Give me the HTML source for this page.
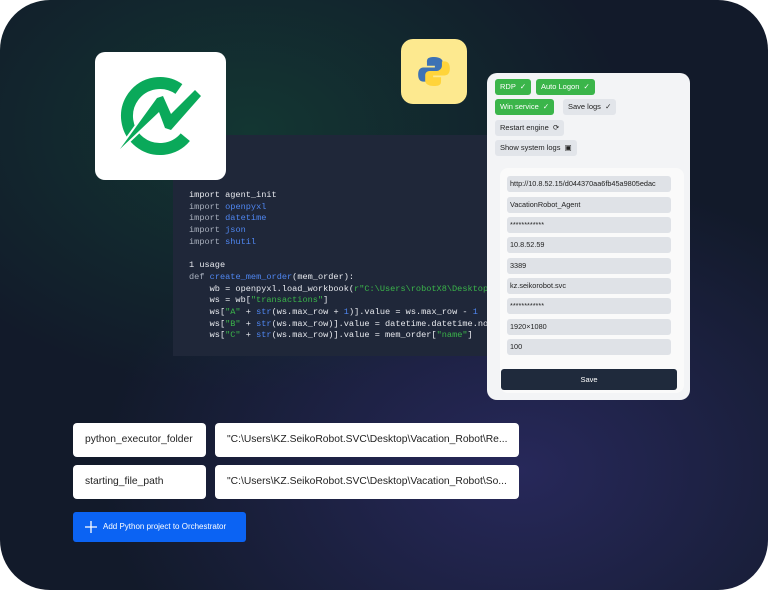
<!DOCTYPE html>
<html><head><meta charset="utf-8"><style>
*{margin:0;padding:0;box-sizing:border-box}
body{width:768px;height:590px;background:#fff;overflow:hidden;font-family:"Liberation Sans",sans-serif;position:relative}
.bg{position:absolute;left:0;top:0;width:768px;height:590px;border-radius:50px;overflow:hidden;
background:radial-gradient(ellipse 380px 260px at 250px 130px,#133632 0%,rgba(20,40,45,0) 100%),radial-gradient(ellipse 420px 300px at 520px 470px,#27285a 0%,rgba(30,30,60,0) 100%),#121a2a}
.abs{position:absolute}
.code{left:173px;top:135px;width:330px;height:221px;background:#1f2739;font-family:"Liberation Mono",monospace;font-size:8.6px;line-height:11.7px;color:#e8eaef;padding:55px 0 0 16px;white-space:pre}
.b{color:#4f86f0}.g{color:#3bb54a}.k{color:#a9b0bd}
.panel{left:487px;top:73px;width:203px;height:327px;background:#f3f4f6;border-radius:10px;font-size:7.5px;color:#222}
.chip{position:absolute;height:16px;border-radius:3px;padding:0 5px;line-height:16px;white-space:nowrap}
.gr{background:#3bb54a;color:#fff}.gy{background:#e2e5ea;color:#222}
.inner{position:absolute;left:13px;top:95px;width:184px;height:225px;background:#fafafa;border-radius:8px}
.f{position:absolute;left:7px;width:164px;height:16px;background:#dfe2e7;border-radius:3px;padding-left:3px;line-height:16px;font-size:7.3px;color:#222;white-space:nowrap;overflow:hidden}
.save{position:absolute;left:14px;top:296px;width:176px;height:21px;background:#1f2a3c;border-radius:3px;color:#fff;text-align:center;line-height:21px;font-size:7.5px}
.box{position:absolute;background:#fff;border-radius:4px;height:34px;line-height:34px;font-size:10.3px;color:#222;padding-left:12px;white-space:nowrap;overflow:hidden}
</style></head><body>
<div class="bg">
<div class="abs code"><span>import agent_init</span>
<span class="k">import</span> <span class="b">openpyxl</span>
<span class="k">import</span> <span class="b">datetime</span>
<span class="k">import</span> <span class="b">json</span>
<span class="k">import</span> <span class="b">shutil</span>

1 usage
<span class="k">def</span> <span class="b">create_mem_order</span>(mem_order):
    wb = openpyxl.load_workbook(<span class="g">r"C:\Users\robotX8\Desktop\t</span>
    ws = wb[<span class="g">"transactions"</span>]
    ws[<span class="g">"A"</span> + <span class="b">str</span>(ws.max_row + <span class="b">1</span>)].value = ws.max_row - <span class="b">1</span>
    ws[<span class="g">"B"</span> + <span class="b">str</span>(ws.max_row)].value = datetime.datetime.now(
    ws[<span class="g">"C"</span> + <span class="b">str</span>(ws.max_row)].value = mem_order[<span class="g">"name"</span>]</div>

<div class="abs" style="left:95px;top:52px;width:131px;height:128px;background:#fff;border-radius:10px">
<svg width="131" height="128" viewBox="0 0 131 128">
<path d="M83.9 37 A33 33 0 1 0 90.3 85.2" fill="none" stroke="#0aa95a" stroke-width="12"/>
<polygon points="25,97 62,46 68,44 76,62 100,38 106,44 76,78 70,76 64,60" fill="#0aa95a" stroke="#fff" stroke-width="4" stroke-linejoin="round"/>
<polygon points="25,97 62,46 68,44 76,62 100,38 106,44 76,78 70,76 64,60" fill="#0aa95a"/>
</svg></div>

<div class="abs" style="left:401px;top:39px;width:66px;height:65px;background:#fde98f;border-radius:12px">
<svg width="66" height="65" viewBox="0 0 66 65">
<g transform="translate(33,32.5) scale(0.88) translate(-33,-32.5)">
<path d="M33 16 c-8 0-8 3-8 6v4h9v2H21c-4 0-6 3-6 8s2 8 6 8h3v-5c0-3 3-6 6-6h8c3 0 5-2 5-5v-6c0-3-3-6-10-6z" fill="#3d72b4"/>
<path d="M33 49 c8 0 8-3 8-6v-4h-9v-2h13c4 0 6-3 6-8s-2-8-6-8h-3v5c0 3-3 6-6 6h-8c-3 0-5 2-5 5v6c0 3 3 6 10 6z" fill="#ffd43b"/>
</g></svg></div>

<div class="abs panel">
<div class="chip gr" style="left:8px;top:6px">RDP &nbsp;✓</div>
<div class="chip gr" style="left:49px;top:6px">Auto Logon &nbsp;✓</div>
<div class="chip gr" style="left:8px;top:26px">Win service &nbsp;✓</div>
<div class="chip gy" style="left:76px;top:26px">Save logs &nbsp;✓</div>
<div class="chip gy" style="left:8px;top:47px">Restart engine &nbsp;⟳</div>
<div class="chip gy" style="left:8px;top:67px">Show system logs &nbsp;▣</div>
<div class="inner">
<div class="f" style="top:8px">http://10.8.52.15/d044370aa6fb45a9805edac</div>
<div class="f" style="top:29px">VacationRobot_Agent</div>
<div class="f" style="top:49px">************</div>
<div class="f" style="top:69px">10.8.52.59</div>
<div class="f" style="top:90px">3389</div>
<div class="f" style="top:110px">kz.seikorobot.svc</div>
<div class="f" style="top:130px">************</div>
<div class="f" style="top:151px">1920×1080</div>
<div class="f" style="top:171px">100</div>
</div>
<div class="save">Save</div>
</div>

<div class="box" style="left:73px;top:423px;width:133px">python_executor_folder</div>
<div class="box" style="left:215px;top:423px;width:304px">"C:\Users\KZ.SeikoRobot.SVC\Desktop\Vacation_Robot\Re...</div>
<div class="box" style="left:73px;top:465px;width:133px">starting_file_path</div>
<div class="box" style="left:215px;top:465px;width:304px">"C:\Users\KZ.SeikoRobot.SVC\Desktop\Vacation_Robot\So...</div>
<div class="abs" style="left:73px;top:512px;width:173px;height:30px;background:#0b63f3;border-radius:3px;color:#fff;font-size:8px;line-height:30px;padding-left:30px">Add Python project to Orchestrator
<svg class="abs" style="left:11px;top:8px" width="14" height="14"><path d="M7 1v12M1 7h12" stroke="#fff" stroke-width="1.3"/></svg></div>
</div>
</body></html>
